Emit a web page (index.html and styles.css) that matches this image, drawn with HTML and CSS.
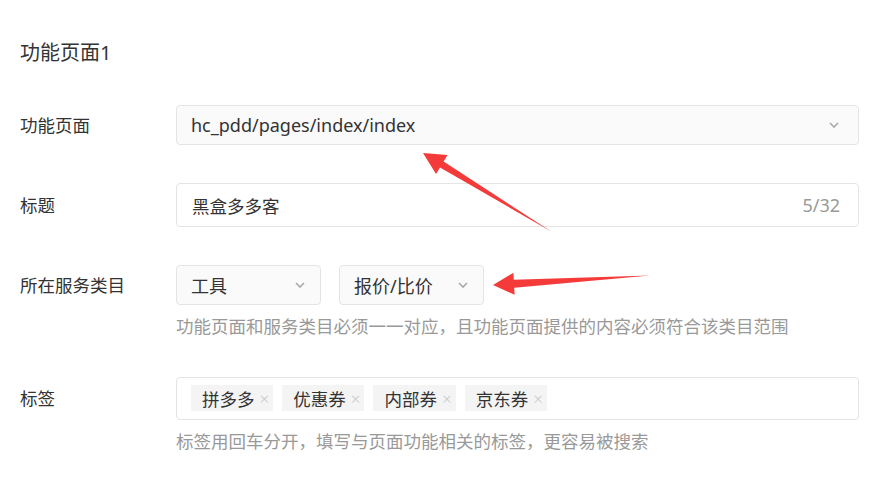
FILE: index.html
```html
<!DOCTYPE html>
<html lang="zh-CN">
<head>
  <meta charset="UTF-8">
  <meta name="viewport" content="width=device-width, initial-scale=1.0">
  <title>功能页面</title>
  <link rel="stylesheet" href="styles.css">
</head>
<body>
  <div class="page">
    <h2 class="title">功能页面1</h2>

    <div class="row">
      <div class="label">功能页面</div>
      <div class="field">
        <div class="select select-wide">
          <span>hc_pdd/pages/index/index</span>
          <svg class="chevron" viewBox="0 0 10 6"><path d="M1 1l4 4 4-4"/></svg>
        </div>
      </div>
    </div>

    <div class="row">
      <div class="label label-tall">标题</div>
      <div class="field">
        <div class="input">
          <span class="cjk">黑盒多多客</span>
          <span class="counter">5/32</span>
        </div>
      </div>
    </div>

    <div class="row row-category">
      <div class="label">所在服务类目</div>
      <div class="field">
        <div class="select-group">
          <div class="select select-small">
            <span>工具</span>
            <svg class="chevron" viewBox="0 0 10 6"><path d="M1 1l4 4 4-4"/></svg>
          </div>
          <div class="select select-small">
            <span>报价/比价</span>
            <svg class="chevron" viewBox="0 0 10 6"><path d="M1 1l4 4 4-4"/></svg>
          </div>
        </div>
        <p class="help">功能页面和服务类目必须一一对应，且功能页面提供的内容必须符合该类目范围</p>
      </div>
    </div>

    <div class="row">
      <div class="label label-tags">标签</div>
      <div class="field">
        <div class="tags">
          <span class="tag">拼多多<i class="close">×</i></span>
          <span class="tag">优惠券<i class="close">×</i></span>
          <span class="tag">内部券<i class="close">×</i></span>
          <span class="tag">京东券<i class="close">×</i></span>
        </div>
        <p class="help">标签用回车分开，填写与页面功能相关的标签，更容易被搜索</p>
      </div>
    </div>

    <!-- annotation arrows -->
    <svg class="marks" viewBox="0 0 882 485">
      <polygon points="423,153 447.5,155 443.6,161.5 552,232 440,167.5 436,174"/>
      <polygon points="493,285 513.4,272.8 513.8,279.8 650,275.5 514.2,287.8 514.6,294.8"/>
    </svg>
  </div>
</body>
</html>
```

FILE: styles.css
```css
* {
  box-sizing: border-box;
}

body {
  margin: 0;
  background: #fff;
  font-family: "Noto Sans", "Noto Sans CJK SC", sans-serif;
  color: #333;
}

.page {
  position: relative;
  width: 882px;
  height: 485px;
  padding: 39px 23px 0 20px;
}

.title {
  margin: 0 0 38px;
  font-size: 20px;
  font-weight: normal;
  line-height: 28px;
}

.row {
  display: flex;
  margin-bottom: 38px;
}

.row-category {
  margin-bottom: 39px;
}

.label {
  width: 156px;
  flex-shrink: 0;
  font-size: 17.5px;
  line-height: 40px;
}

.label-tall {
  line-height: 44px;
}

.label-tags {
  line-height: 43px;
}

.field {
  flex: 1;
}

.select,
.input {
  display: flex;
  align-items: center;
  justify-content: space-between;
  border: 1px solid #e4e4e4;
  border-radius: 4px;
  font-size: 18px;
}

.select {
  height: 40px;
  background: #fafafa;
}

.select-wide {
  padding: 0 19px 0 14px;
}

.input {
  height: 44px;
  padding: 0 18px 0 15px;
  background: #fff;
}

.cjk {
  font-size: 17.5px;
}

.counter {
  color: #999;
}

.chevron {
  width: 10px;
  height: 6px;
  fill: none;
  stroke: #a8a8a8;
  stroke-width: 1.6;
}

.select-group {
  display: flex;
  gap: 18px;
}

.select-small {
  width: 145px;
  padding: 0 15px 0 14px;
}

.help {
  margin: 9px 0 0;
  font-size: 17.5px;
  line-height: 24px;
  color: #999;
}

.tags {
  display: flex;
  gap: 9px;
  height: 43px;
  padding: 7px 14px;
  border: 1px solid #e4e4e4;
  border-radius: 4px;
}

.tag {
  display: flex;
  align-items: center;
  height: 26px;
  padding: 0 4px 0 11px;
  background: #f4f4f5;
  font-size: 17.5px;
}

.close {
  margin-left: 5px;
  font-style: normal;
  font-size: 17px;
  font-weight: 300;
  color: #c8c8c8;
}

.marks {
  position: absolute;
  left: 0;
  top: 0;
  width: 882px;
  height: 485px;
  pointer-events: none;
  fill: #f53a3a;
}
```
